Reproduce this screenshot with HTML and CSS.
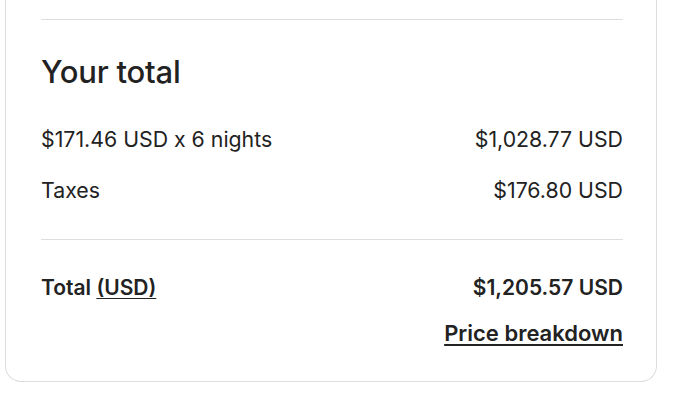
FILE: index.html
```html
<!DOCTYPE html>
<html>
<head>
<meta charset="utf-8">
<link rel="stylesheet" href="styles.css">
</head>
<body>
<div class="card">
  <div class="divider"></div>
  <h2 class="title">Your total</h2>
  <div class="row"><span>$171.46 USD x 6 nights</span><span>$1,028.77 USD</span></div>
  <div class="row"><span>Taxes</span><span>$176.80 USD</span></div>
  <div class="divider second"></div>
  <div class="row total"><span>Total <u>(USD)</u></span><span>$1,205.57 USD</span></div>
  <div class="breakdown"><a href="#">Price breakdown</a></div>
</div>
</body>
</html>
```
FILE: styles.css
```css
html, body {
  margin: 0;
  padding: 0;
  background: #ffffff;
}
body {
  font-family: Inter, "Noto Sans", sans-serif;
  color: #222222;
}
.card {
  margin-left: 5px;
  width: 582px;
  padding: 19px 33px 0 35px;
  height: 362px;
  border: 1px solid #dddddd;
  border-top: none;
  border-radius: 0 0 16px 16px;
}
.divider {
  height: 1px;
  background: #dddddd;
}
.title {
  margin: 36px 0 0 0;
  font-size: 31px;
  line-height: 32px;
  font-weight: 500;
  letter-spacing: -0.2px;
}
.row {
  display: flex;
  justify-content: space-between;
  font-size: 21.3px;
  line-height: 24px;
  margin-top: 39px;
}
.row + .row {
  margin-top: 27px;
}
.second {
  margin-top: 37px;
}
.total {
  font-weight: 600;
  font-size: 21px;
  margin-top: 36px;
}
.total u {
  text-decoration-thickness: 1px;
  text-underline-offset: 3px;
}
.breakdown {
  text-align: right;
  font-size: 22px;
  line-height: 24px;
  font-weight: 600;
  margin-top: 21px;
}
.breakdown a {
  color: #222222;
  text-decoration: underline;
  text-decoration-thickness: 2px;
  text-underline-offset: 3px;
}
```
